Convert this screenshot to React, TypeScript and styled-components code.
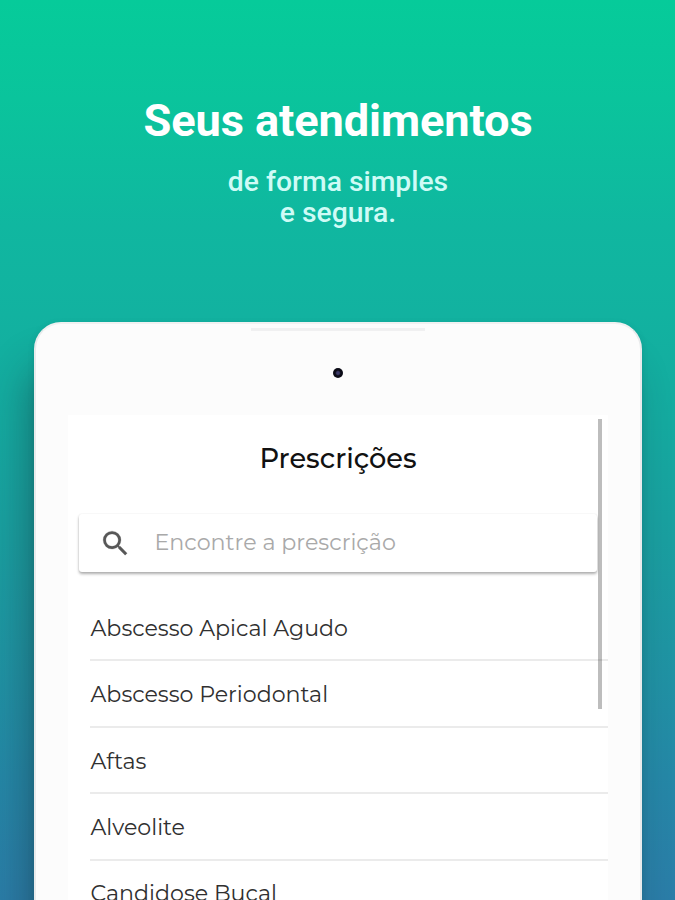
import React from 'react';
import styled, { createGlobalStyle } from 'styled-components';

const GlobalStyle = createGlobalStyle`
  * { box-sizing: border-box; }
  body { margin: 0; overflow: hidden; }
`;

const Page = styled.main`
  display: flex;
  flex-direction: column;
  align-items: center;
  width: 675px;
  height: 900px;
  overflow: hidden;
  background: linear-gradient(180deg, #06cb9a 0%, #0ac49c 11%, #10b7a0 25%, #12b2a0 35%, #15aaa0 47%, #1a9fa0 60%, #1f95a3 72%, #2588a7 86%, #2b7da8 100%);
`;

const Hero = styled.header`
  display: flex;
  flex-direction: column;
  align-items: center;
  flex: none;
  height: 322px;
  padding-top: 94px;
  font-family: Roboto, sans-serif;
  text-align: center;
`;

const Headline = styled.h1`
  margin: 0;
  padding-left: 1px;
  color: #fff;
  font-size: 45.2px;
  font-weight: 700;
  line-height: 54px;
  letter-spacing: -0.1px;
  white-space: nowrap;
`;

const Tagline = styled.p`
  margin: 18px 0 0;
  padding-left: 1px;
  color: #cffbf6;
  font-size: 28.3px;
  font-weight: 500;
  line-height: 31px;
`;

const Tablet = styled.section`
  display: flex;
  flex-direction: column;
  align-items: center;
  flex: none;
  width: 608px;
  height: 700px;
  border: 2px solid #e9ebec;
  border-top-color: #f0f1f1;
  border-radius: 27px 27px 0 0;
  background: #fcfcfc;
  box-shadow: -10px 40px 44px -8px rgba(20, 40, 50, 0.48), 0 2px 6px rgba(0, 80, 90, 0.2);
`;

const Speaker = styled.div`
  width: 174px;
  height: 3px;
  margin-top: 4px;
  background: #f0f0f1;
`;

const Camera = styled.div`
  width: 10px;
  height: 10px;
  margin-top: 36.5px;
  border-radius: 50%;
  background: radial-gradient(circle, #3c3a68 0 1.3px, #0b0b16 2.8px);
`;

const Screen = styled.div`
  position: relative;
  flex: 1;
  width: 540px;
  margin-top: 37.5px;
  background: #fff;
  font-family: Montserrat, Inter, sans-serif;
`;

const ScreenTitle = styled.h2`
  margin: 0;
  padding: 26px 0 0 1px;
  color: #111;
  font-size: 27.2px;
  font-weight: 500;
  line-height: 36px;
  text-align: center;
`;

const SearchBar = styled.label`
  display: flex;
  align-items: center;
  gap: 23px;
  width: 518px;
  height: 58px;
  margin: 37px 0 0 11px;
  padding-left: 20px;
  border-radius: 3px;
  background: #fff;
  color: #a9a9a9;
  font-size: 22.2px;
  line-height: 28px;
  box-shadow: 0 2px 3px rgba(0, 0, 0, 0.32), 0 0 2px rgba(0, 0, 0, 0.07);
`;

const SearchIcon = styled.svg`
  flex: none;
  width: 33px;
  height: 33px;
  fill: #575757;
  stroke: #575757;
  stroke-width: 0.15;
`;

const List = styled.ul`
  margin: 23px 0 0 22px;
  padding: 0;
  list-style: none;
`;

const Item = styled.li`
  display: flex;
  align-items: center;
  width: 518px;
  height: 66.4px;
  padding: 2.4px 0 0 1px;
  border-bottom: 2px solid #ebebeb;
  color: #303030;
  font-size: 22.15px;
  font-weight: 400;
`;

const Scrollbar = styled.div`
  position: absolute;
  top: 4px;
  right: 6px;
  width: 4px;
  height: 290px;
  background: rgba(0, 0, 0, 0.26);
`;

const prescriptions = [
  'Abscesso Apical Agudo',
  'Abscesso Periodontal',
  'Aftas',
  'Alveolite',
  'Candidose Bucal',
];

export default function App() {
  return (
    <>
      <GlobalStyle />
      <Page>
        <Hero>
          <Headline>Seus atendimentos</Headline>
          <Tagline>
            de forma simples
            <br />e segura.
          </Tagline>
        </Hero>
        <Tablet>
          <Speaker />
          <Camera />
          <Screen>
            <ScreenTitle>Prescrições</ScreenTitle>
            <SearchBar>
              <SearchIcon viewBox="0 0 24 24">
                <path d="M15.5 14h-.79l-.28-.27A6.47 6.47 0 0 0 16 9.5 6.5 6.5 0 1 0 9.5 16c1.61 0 3.09-.59 4.23-1.57l.27.28v.79l5 4.99L20.49 19l-4.99-5zm-6 0C7.01 14 5 11.99 5 9.5S7.01 5 9.5 5 14 7.01 14 9.5 11.99 14 9.5 14z" />
              </SearchIcon>
              <span>Encontre a prescrição</span>
            </SearchBar>
            <List>
              {prescriptions.map((name) => (
                <Item key={name}>{name}</Item>
              ))}
            </List>
            <Scrollbar />
          </Screen>
        </Tablet>
      </Page>
    </>
  );
}
